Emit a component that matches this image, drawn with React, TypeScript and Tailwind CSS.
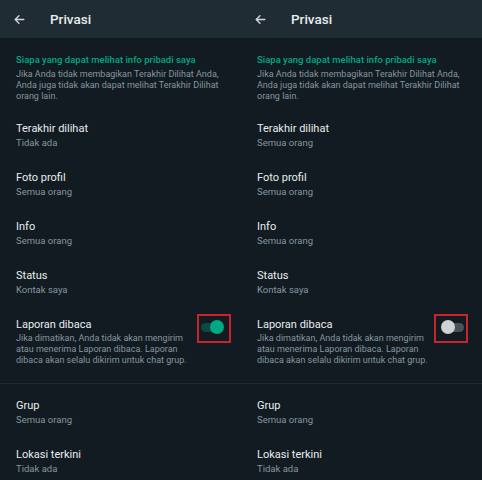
import { FC } from "react";

interface Item {
  title: string;
  sub: string;
}

const topItems: Item[] = [
  { title: "Terakhir dilihat", sub: "" },
  { title: "Foto profil", sub: "Semua orang" },
  { title: "Info", sub: "Semua orang" },
  { title: "Status", sub: "Kontak saya" },
];

const bottomItems: Item[] = [
  { title: "Grup", sub: "Semua orang" },
  { title: "Lokasi terkini", sub: "Tidak ada" },
];

const Row: FC<{ item: Item }> = ({ item }) => (
  <div className="h-[49px] pl-4 pt-[8px]">
    <p className="text-[11px] leading-[14px] text-[#e9edef]">{item.title}</p>
    <p className="mt-[1px] text-[9.5px] leading-[12px] text-[#8696a0]">{item.sub}</p>
  </div>
);

const Toggle: FC<{ on: boolean }> = ({ on }) => (
  <div className="relative h-[14px] w-[24px]">
    <div
      className={`absolute left-[1px] top-[3px] h-[9px] w-[22px] rounded-full ${
        on ? "bg-[#0b4a42]" : "bg-[#4a5257]"
      }`}
    ></div>
    <div
      className={`absolute top-0 h-[14px] w-[14px] rounded-full ${
        on ? "right-0 bg-[#00a884]" : "left-0 bg-[#cfd2d4]"
      }`}
    ></div>
  </div>
);

const Panel: FC<{ readOn: boolean; lastSeen: string }> = ({ readOn, lastSeen }) => (
  <div className="h-[480px] w-[241px] overflow-hidden bg-[#111b21]">
    <nav className="flex h-[38px] items-center bg-[#202c33]">
      <svg className="ml-[13px] h-[13px] w-[13px] text-[#d1d7db]" fill="none" stroke="currentColor" viewBox="0 0 24 24">
        <path strokeLinecap="round" strokeLinejoin="round" strokeWidth={2.4} d="M20 12H4M11 5l-7 7 7 7" />
      </svg>
      <span className="ml-[24px] text-[13.5px] font-medium text-[#e9edef]">Privasi</span>
    </nav>

    <div className="px-4 pt-[16px]">
      <p className="text-[9.5px] font-medium leading-[12px] text-[#00a884]">
        Siapa yang dapat melihat info pribadi saya
      </p>
      <p className="mt-[3px] text-[9px] leading-[11px] text-[#8696a0]">
        Jika Anda tidak membagikan Terakhir Dilihat Anda,
        <br />
        Anda juga tidak akan dapat melihat Terakhir Dilihat
        <br />
        orang lain.
      </p>
    </div>

    <div className="mt-[12px]">
      {topItems.map((item, i) => (
        <Row key={item.title} item={i === 0 ? { ...item, sub: lastSeen } : item} />
      ))}
    </div>

    <div className="relative flex h-[73px] justify-between pl-4 pr-[17px] pt-[8px]">
      <div>
        <p className="text-[11px] leading-[14px] text-[#e9edef]">Laporan dibaca</p>
        <p className="mt-[1px] text-[9px] leading-[11px] text-[#8696a0]">
          Jika dimatikan, Anda tidak akan mengirim
          <br />
          atau menerima Laporan dibaca. Laporan
          <br />
          dibaca akan selalu dikirim untuk chat grup.
        </p>
      </div>
      <div className="pt-[2px]">
        <Toggle on={readOn} />
      </div>
      <div
        className={`absolute top-[4px] h-[29px] w-[34px] border-2 border-[#c8242b] ${
          readOn ? "right-[10px]" : "right-[14px]"
        }`}
      ></div>
    </div>

    <div className="h-px bg-[#1f2a31]"></div>
    <div className="pt-[7px]">
      {bottomItems.map((item) => (
        <Row key={item.title} item={item} />
      ))}
    </div>
  </div>
);

export default function App() {
  return (
    <div className="flex h-[480px] w-[482px] bg-[#111b21]" style={{ fontFamily: "Roboto, 'Noto Sans', sans-serif" }}>
      <Panel readOn={true} lastSeen="Tidak ada" />
      <Panel readOn={false} lastSeen="Semua orang" />
    </div>
  );
}
